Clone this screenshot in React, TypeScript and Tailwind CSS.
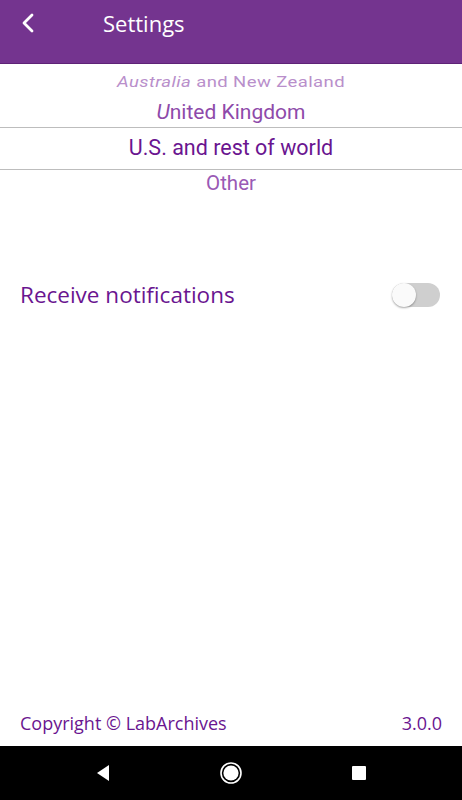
import React, { useState } from 'react';

const regions = ['Australia and New Zealand', 'United Kingdom', 'U.S. and rest of world', 'Other'];

export default function App() {
  const [notify, setNotify] = useState(false);
  const selected = 2;

  return (
    <div className="w-[462px] h-[800px] flex flex-col bg-white overflow-hidden">
      {/* header */}
      <div className="h-[64px] bg-[#74348f] border-b border-[#5e2277] flex items-start shrink-0">
        <button className="w-[52px] h-[46px] flex items-center justify-center pl-1">
          <svg width="14" height="20" viewBox="0 0 14 20" fill="none">
            <path d="M11 2 L3 10 L11 18" stroke="white" strokeWidth="2.8" strokeLinecap="round" strokeLinejoin="round" />
          </svg>
        </button>
        <h1 className="ml-[51px] mt-[8px] text-[22px] leading-[30px] text-white font-['Open_Sans',sans-serif]">Settings</h1>
      </div>

      {/* region picker */}
      <div className="flex flex-col items-center font-['Roboto',sans-serif]">
        <div className="h-[34px] pt-[3px] w-full flex items-center justify-center">
          <span className="inline-block text-[18.5px] text-[#b98fcb] tracking-[0.4px] scale-y-[0.8] origin-center">
            <i>Australia</i> and New Zealand
          </span>
        </div>
        <div className="h-[29px] w-full flex items-start justify-center">
          <span className="text-[21px] leading-[28px] text-[#8e4aaa]"><i>U</i>nited Kingdom</span>
        </div>
        <div className="h-[43px] w-full border-y border-[#bdbdbd] flex items-center justify-center">
          <span className="text-[21.5px] text-[#6a1590]">{regions[selected]}</span>
        </div>
        <div className="h-[28px] w-full flex items-center justify-center">
          <span className="text-[20.5px] -mt-[1px] text-[#9a5ab5]">Other</span>
        </div>
      </div>

      {/* notifications */}
      <div className="mt-[82px] h-[30px] px-5 flex items-center justify-between font-['Open_Sans',sans-serif]">
        <span className="text-[22.5px] text-[#6a1590]">Receive notifications</span>
        <button
          onClick={() => setNotify(!notify)}
          className={`relative w-[48px] h-[24px] mr-[2px] rounded-full ${notify ? 'bg-[#c59ad6]' : 'bg-[#cfcfcf]'}`}
        >
          <span
            className={`absolute top-[0px] ${notify ? 'left-[24px] bg-[#74348f]' : 'left-[0px] bg-[#fafafa]'} w-[24px] h-[24px] rounded-full shadow-[0_1px_2px_rgba(0,0,0,0.35)]`}
          />
        </button>
      </div>

      <div className="flex-1" />

      {/* footer */}
      <div className="h-[46px] px-5 flex items-center justify-between font-['Open_Sans',sans-serif] text-[18px] text-[#6a1590]">
        <span>Copyright © LabArchives</span>
        <span>3.0.0</span>
      </div>

      {/* android nav bar */}
      <div className="h-[54px] bg-black flex items-center justify-between px-[96px] shrink-0">
        <svg width="14" height="18" viewBox="0 0 14 18">
          <path d="M13 1 L1 9 L13 17 Z" fill="white" />
        </svg>
        <svg width="22" height="22" viewBox="0 0 22 22">
          <circle cx="11" cy="11" r="10" fill="none" stroke="white" strokeWidth="1.6" />
          <circle cx="11" cy="11" r="7.6" fill="white" />
        </svg>
        <div className="w-[14px] h-[14px] bg-white rounded-[1px]" />
      </div>
    </div>
  );
}
